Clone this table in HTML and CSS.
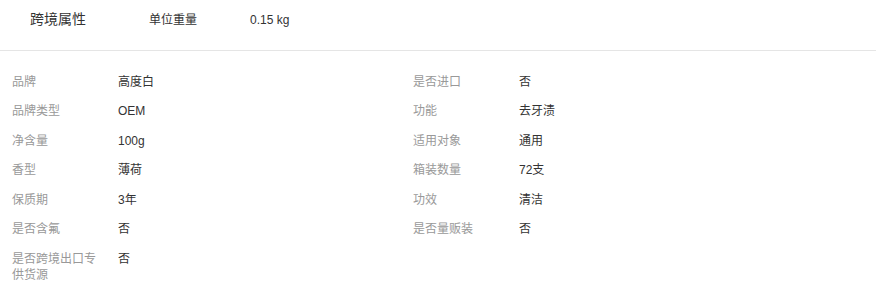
FILE: index.html
```html
<!DOCTYPE html>
<html lang="zh">
<head>
<meta charset="utf-8">
<link rel="stylesheet" href="styles.css">
</head>
<body>
<div class="panel">
  <div class="header">
    <div class="title">跨境属性</div>
    <div class="attr-label">单位重量</div>
    <div class="attr-value">0.15 kg</div>
  </div>
  <div class="grid">
    <div class="item"><div class="label">品牌</div><div class="value">高度白</div></div>
    <div class="item"><div class="label">是否进口</div><div class="value">否</div></div>
    <div class="item"><div class="label">品牌类型</div><div class="value">OEM</div></div>
    <div class="item"><div class="label">功能</div><div class="value">去牙渍</div></div>
    <div class="item"><div class="label">净含量</div><div class="value">100g</div></div>
    <div class="item"><div class="label">适用对象</div><div class="value">通用</div></div>
    <div class="item"><div class="label">香型</div><div class="value">薄荷</div></div>
    <div class="item"><div class="label">箱装数量</div><div class="value">72支</div></div>
    <div class="item"><div class="label">保质期</div><div class="value">3年</div></div>
    <div class="item"><div class="label">功效</div><div class="value">清洁</div></div>
    <div class="item"><div class="label">是否含氟</div><div class="value">否</div></div>
    <div class="item"><div class="label">是否量贩装</div><div class="value">否</div></div>
    <div class="item"><div class="label">是否跨境出口专供货源</div><div class="value">否</div></div>
  </div>
</div>
</body>
</html>
```
FILE: styles.css
```css
* { box-sizing: border-box; }
html, body { margin: 0; padding: 0; background: #fff; }
body {
  font-family: "Liberation Sans", "Noto Sans CJK SC", sans-serif;
  color: #333;
}
.panel { width: 876px; }
.header {
  display: flex;
  align-items: baseline;
  height: 51px;
  padding: 9px 0 0 30px;
  border-bottom: 1px solid #e5e5e5;
}
.title {
  font-size: 14px;
  line-height: 20px;
  width: 119px;
  color: #333;
}
.attr-label {
  font-size: 12px;
  line-height: 20px;
  width: 101px;
  color: #333;
}
.attr-value {
  font-size: 12px;
  line-height: 20px;
  color: #333;
}
.grid {
  display: grid;
  grid-template-columns: 401px 401px;
  padding: 16px 12px 0 12px;
}
.item {
  display: flex;
  padding: 6.75px 0;
  font-size: 12px;
  line-height: 16px;
}
.label {
  width: 90px;
  margin-right: 16px;
  color: #999;
}
.value {
  color: #333;
}
```
